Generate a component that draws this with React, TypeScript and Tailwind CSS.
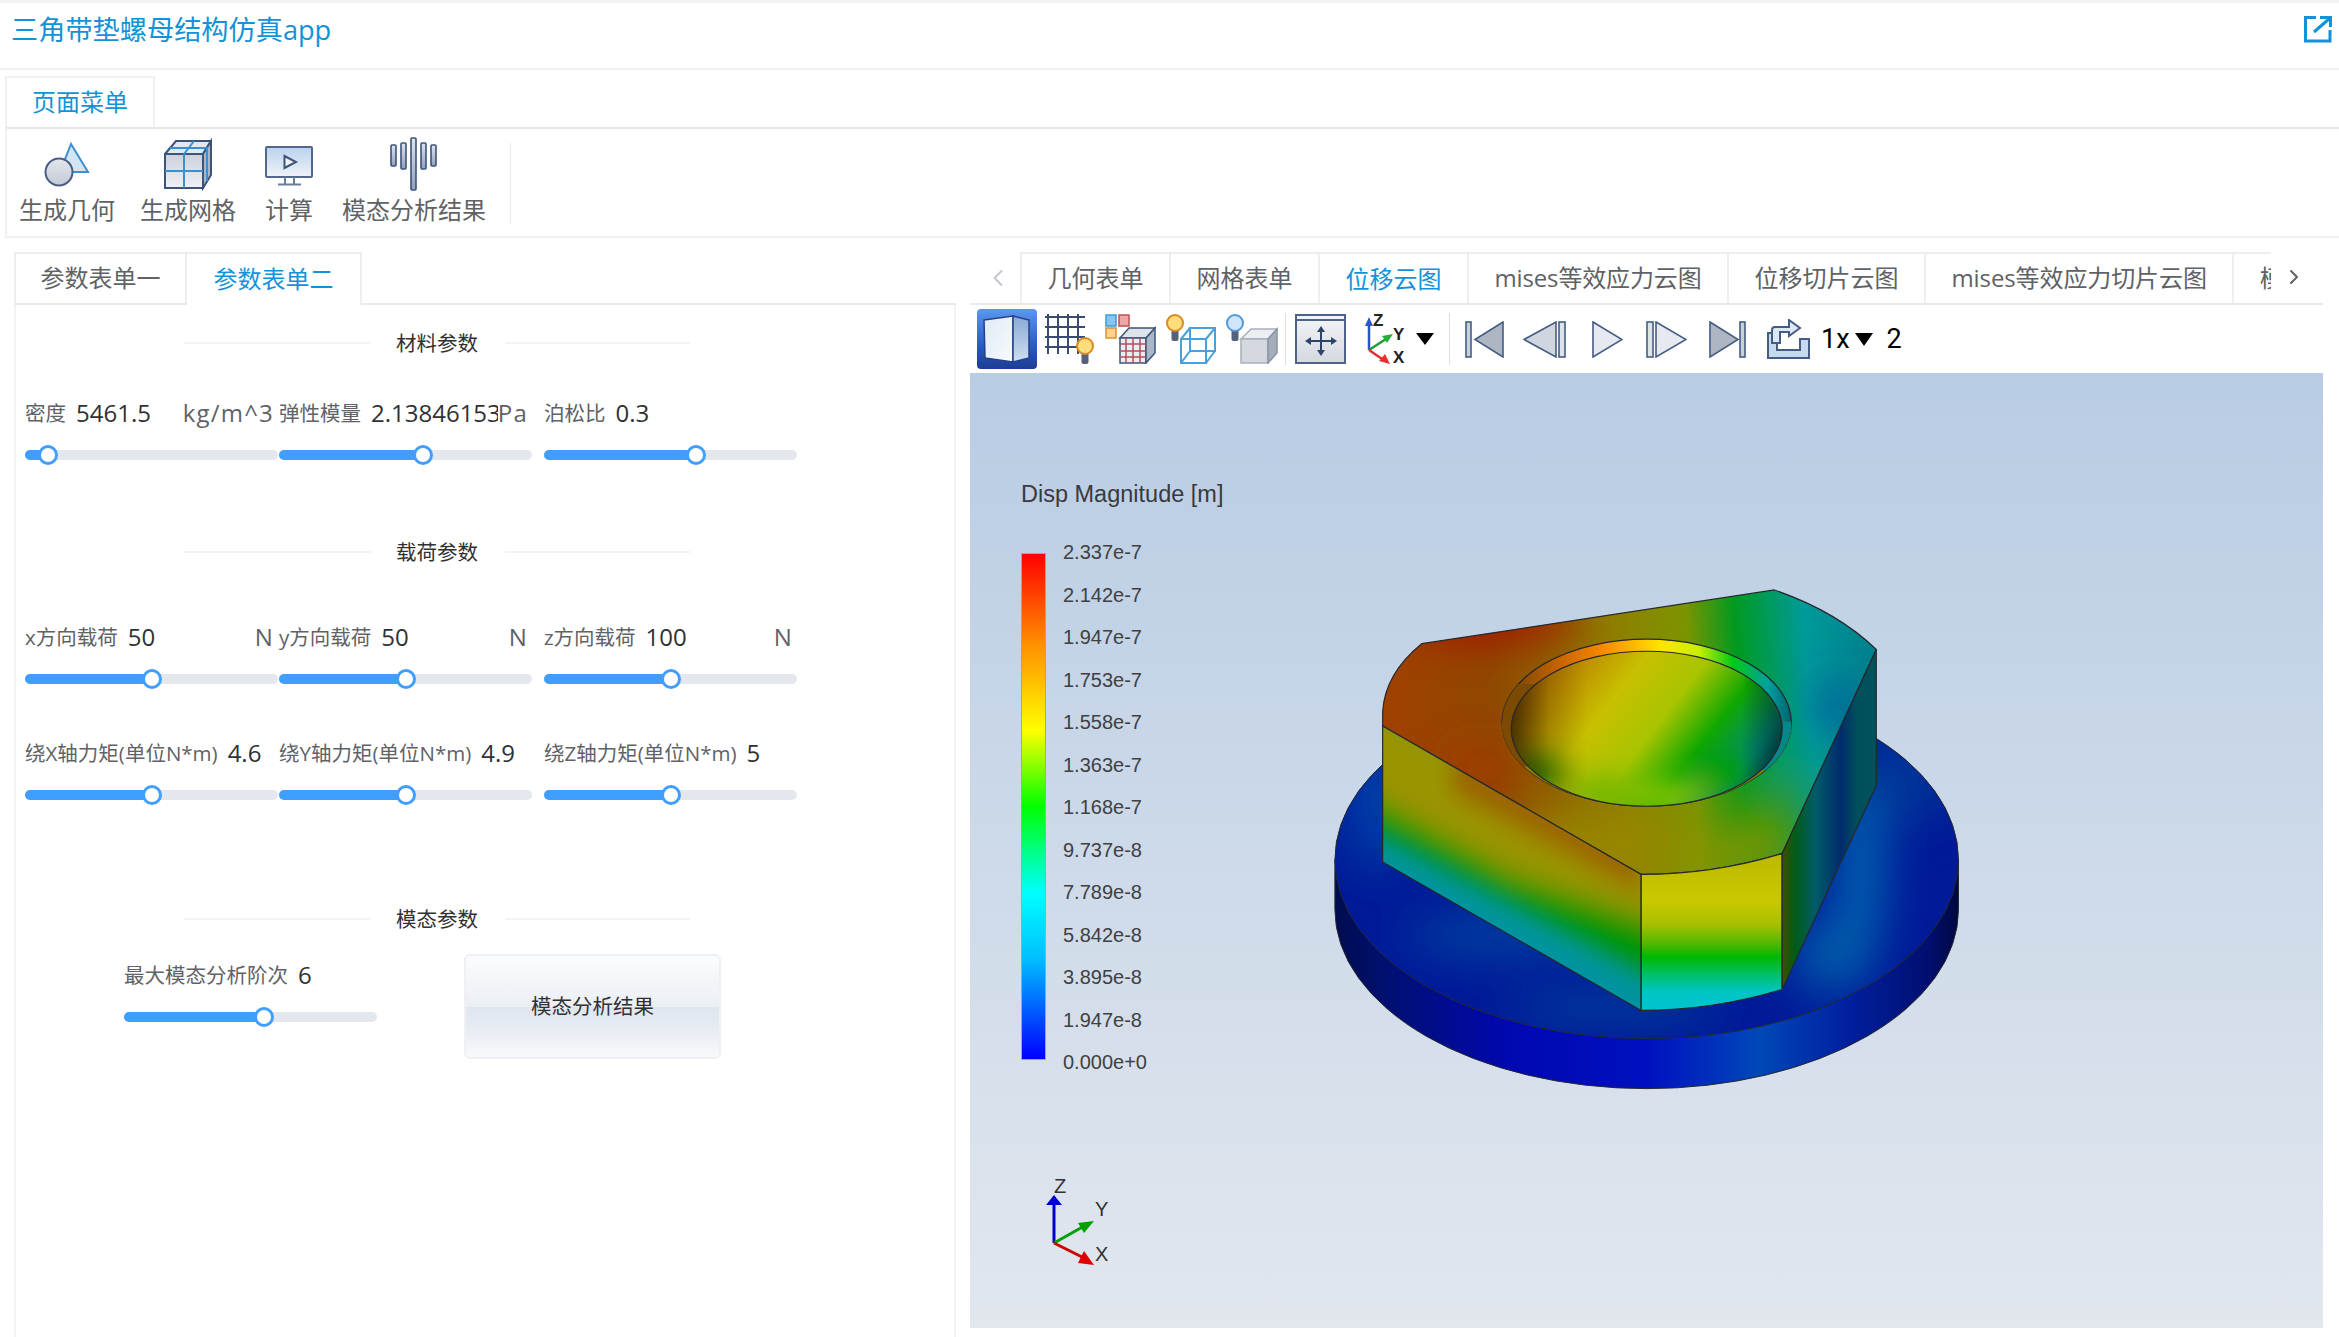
import React from "react";
import { ChevronLeft, ChevronRight } from "lucide-react";

const FONT = { fontFamily: '"Open Sans","Noto Sans CJK SC",sans-serif' };

function Slider({ pct }: { pct: number }) {
  return (
    <div className="relative h-[20px] w-full flex items-center">
      <div className="h-[10px] w-full rounded-full bg-[#e4e7ed] overflow-hidden">
        <div className="h-full bg-[#409eff]" style={{ width: `${pct}%` }} />
      </div>
      <div
        className="absolute top-0 -ml-[10px] h-[20px] w-[20px] rounded-full border-[3px] border-[#409eff] bg-white"
        style={{ left: `${pct}%` }}
      />
    </div>
  );
}

function Field({ label, value, unit, pct, w }: { label: string; value: string; unit?: string; pct: number; w: string }) {
  return (
    <div className={w}>
      <div className="flex h-[30px] w-[249px] items-center whitespace-nowrap">
        <span className="text-[20.5px] text-[#606266]">{label}</span>
        <span className="ml-[10px] min-w-0 flex-1 overflow-hidden text-[24px] text-[#303133]">{value}</span>
        {unit && <span className="text-[24px] tracking-[1.2px] text-[#606266]">{unit}</span>}
      </div>
      <div className="mt-[17px] w-[253px]">
        <Slider pct={pct} />
      </div>
    </div>
  );
}

function SectionTitle({ title, className }: { title: string; className: string }) {
  return (
    <div className={`ml-[159px] flex h-[30px] items-center ${className}`}>
      <div className="h-[2px] w-[187px] bg-[#f2f3f5]" />
      <span className="ml-[25px] mr-[27px] w-[82px] whitespace-nowrap text-[20.5px] text-[#303133]">{title}</span>
      <div className="h-[2px] w-[185px] bg-[#f2f3f5]" />
    </div>
  );
}

function Tab({ label, active, first, className }: { label: string; active?: boolean; first?: boolean; className?: string }) {
  return (
    <div
      className={`flex h-[51px] flex-none items-center justify-center border-t-2 border-r-2 border-[#eceef2] px-[25.5px] pb-[2px] text-[24px] whitespace-nowrap ${first ? "border-l-2" : ""} ${active ? "text-[#1492d8] -mb-[2px] h-[53px] bg-white" : "text-[#606266]"} ${className ?? ""}`}
    >
      {label}
    </div>
  );
}

/* ---------- ribbon icons ---------- */
function GeoIcon() {
  return (
    <svg width="48" height="54" viewBox="0 0 48 54">
      <defs>
        <linearGradient id="g1" x1="0" y1="0" x2="0" y2="1"><stop offset="0" stopColor="#e3e6ec" /><stop offset="1" stopColor="#c4c9d4" /></linearGradient>
      </defs>
      <path d="M28 7 L45 35 L17 35 Z" fill="#d3e4f4" stroke="#3f8fcf" strokeWidth="2" />
      <circle cx="16" cy="35" r="13.5" fill="url(#g1)" stroke="#4a5e82" strokeWidth="2" />
    </svg>
  );
}
function MeshIcon() {
  return (
    <svg width="48" height="54" viewBox="0 0 48 54">
      <defs>
        <linearGradient id="g2" x1="0" y1="0" x2="0" y2="1"><stop offset="0" stopColor="#ccd0da" /><stop offset="1" stopColor="#f0f1f5" /></linearGradient>
      </defs>
      <path d="M1 17 L12 4 L47 4 L39 17 Z" fill="#dfe8f3" stroke="#3d5478" strokeWidth="2" />
      <rect x="1" y="17" width="38" height="34" fill="url(#g2)" stroke="#3d5478" strokeWidth="2" />
      <path d="M39 17 L47 4 L47 38 L39 51 Z" fill="#a9b5c9" stroke="#3d5478" strokeWidth="2" />
      <path d="M20 17 V51 M1 34 H39 M20 17 L30 4 M6 11 H43 M43 10 V44" stroke="#3a8fcf" strokeWidth="2" fill="none" />
    </svg>
  );
}
function MonitorIcon() {
  return (
    <svg width="48" height="54" viewBox="0 0 48 54">
      <defs>
        <linearGradient id="g3" x1="0" y1="0" x2="0" y2="1"><stop offset="0" stopColor="#b9d2ee" /><stop offset="1" stopColor="#eff3f8" /></linearGradient>
      </defs>
      <rect x="1" y="10" width="46" height="30" rx="1" fill="url(#g3)" stroke="#51688c" strokeWidth="2" />
      <path d="M19.5 19 L31 25 L19.5 31 Z" fill="#eef3f9" stroke="#3d5478" strokeWidth="2" />
      <path d="M20 40 V47 M29 40 V47 M13 47.5 H36" stroke="#6a7d9c" strokeWidth="2" fill="none" />
    </svg>
  );
}
function BarsIcon() {
  const bars = [[1, 7, 29], [11, 5, 32], [21, 0, 53], [31, 5, 32], [41, 7, 29]];
  return (
    <svg width="48" height="54" viewBox="0 0 48 54">
      <defs>
        <linearGradient id="g4" x1="0" y1="0" x2="0" y2="1"><stop offset="0" stopColor="#dfe5ee" /><stop offset="1" stopColor="#8fa0bd" /></linearGradient>
      </defs>
      {bars.map(([x, a, b]) => (
        <rect key={x} x={x} y={a + 1} width="5" height={b - a - 1} fill="url(#g4)" stroke="#3d5478" strokeWidth="1.6" rx="1" />
      ))}
    </svg>
  );
}

function RibbonItem({ icon, label, className }: { icon: React.ReactNode; label: string; className: string }) {
  return (
    <div className={`flex flex-col items-center ${className}`}>
      <div className="h-[54px]">{icon}</div>
      <div className="mt-[4px] h-[30px] text-[24px] leading-[30px] text-[#606266] whitespace-nowrap">{label}</div>
    </div>
  );
}

/* ---------- toolbar icons ---------- */
function ActiveBox() {
  return (
    <div className="h-[60px] w-[60px] flex-none rounded-[4px] bg-[linear-gradient(#5c97ee,#2a5cc0_60%,#1c3c94)]">
      <svg width="60" height="60" viewBox="0 0 60 60">
        <defs>
          <linearGradient id="t1" x1="0" y1="0" x2="1" y2="1"><stop offset="0" stopColor="#dfe9f6" /><stop offset="1" stopColor="#f9fbfd" /></linearGradient>
          <linearGradient id="t2" x1="0" y1="0" x2="0" y2="1"><stop offset="0" stopColor="#8aa9d6" /><stop offset="1" stopColor="#cfdff0" /></linearGradient>
        </defs>
        <path d="M7 11 L36 7 L36 53 L8 49 Z" fill="url(#t1)" stroke="#22418a" strokeWidth="1.5" />
        <path d="M36 7 L52 11 L52 49 L36 53 Z" fill="url(#t2)" stroke="#22418a" strokeWidth="1.5" />
      </svg>
    </div>
  );
}
function Bulb({ x, y, c1, c2 }: { x: number; y: number; c1: string; c2: string }) {
  return (
    <g>
      <rect x={x - 3.5} y={y + 6} width="7" height="12" rx="2" fill="#55617a" />
      <circle cx={x} cy={y} r="8" fill={c1} stroke={c2} strokeWidth="2" />
    </g>
  );
}
function MeshBulb() {
  return (
    <svg width="50" height="50" viewBox="0 0 50 50" className="ml-[8px] flex-none">
      <path d="M3 0 V40 M13 0 V40 M23 0 V40 M33 0 V40 M0 3 H40 M0 13 H40 M0 23 H40 M0 33 H40" stroke="#3a4a70" strokeWidth="2" fill="none" />
      <Bulb x={40} y={32} c1="#ffdc7c" c2="#d98a20" />
    </svg>
  );
}
function ColorCube() {
  return (
    <svg width="51" height="50" viewBox="0 0 51 50" className="ml-[10px] flex-none">
      <rect x="1" y="1" width="10" height="11" fill="#8cc4ee" stroke="#3d9ad8" strokeWidth="1.5" />
      <rect x="14" y="1" width="10" height="11" fill="#eaa8a8" stroke="#c05050" strokeWidth="1.5" />
      <rect x="1" y="14" width="10" height="10" fill="#fcd488" stroke="#e09030" strokeWidth="1.5" />
      <path d="M15 24 L24 14 L50 14 L41 24 Z" fill="#dfe3ea" stroke="#3d5478" strokeWidth="1.5" />
      <rect x="15" y="24" width="26" height="25" fill="#ececf0" stroke="#3d5478" strokeWidth="1.5" />
      <path d="M41 24 L50 14 L50 39 L41 49 Z" fill="#a9b5c9" stroke="#3d5478" strokeWidth="1.5" />
      <path d="M21 24 V49 M28 24 V49 M35 24 V49 M15 30 H41 M15 37 H41 M15 43 H41" stroke="#b0505c" strokeWidth="1.5" fill="none" />
    </svg>
  );
}
function WireBulb() {
  return (
    <svg width="50" height="50" viewBox="0 0 50 50" className="ml-[10px] flex-none">
      <g fill="none" stroke="#4aa0d8" strokeWidth="2">
        <rect x="15" y="25" width="25" height="24" />
        <rect x="24" y="14" width="25" height="23" />
        <path d="M15 25 L24 14 M40 25 L49 14 M40 49 L49 37 M15 49 L24 37" />
      </g>
      <Bulb x={9} y={9} c1="#ffdc7c" c2="#d98a20" />
    </svg>
  );
}
function SolidBulb() {
  return (
    <svg width="52" height="50" viewBox="0 0 52 50" className="ml-[10px] flex-none">
      <path d="M15 25 L25 15 L51 15 L42 25 Z" fill="#eceef2" stroke="#a8b0bc" strokeWidth="1.5" />
      <rect x="15" y="25" width="27" height="24" fill="#d5d8de" stroke="#a8b0bc" strokeWidth="1.5" />
      <path d="M42 25 L51 15 L51 39 L42 49 Z" fill="#a5adba" stroke="#8a94a4" strokeWidth="1.5" />
      <Bulb x={9} y={9} c1="#cfe6fa" c2="#4d9ad8" />
    </svg>
  );
}
function FitIcon() {
  return (
    <svg width="51" height="50" viewBox="0 0 51 50" className="ml-[9px] flex-none">
      <defs>
        <linearGradient id="t3" x1="0" y1="0" x2="0" y2="1"><stop offset="0" stopColor="#f4f5f8" /><stop offset="1" stopColor="#d4d8df" /></linearGradient>
      </defs>
      <rect x="1" y="1" width="49" height="48" fill="url(#t3)" stroke="#4d6488" strokeWidth="2" />
      <path d="M1 6 H50" stroke="#4d6488" strokeWidth="2" />
      <path d="M26 16 V38 M14 27 H38" stroke="#2c4468" strokeWidth="2" />
      <path d="M26 12 L30 18 H22 Z M26 42 L30 36 H22 Z M10 27 L16 23 V31 Z M42 27 L36 23 V31 Z" fill="#2c4468" />
    </svg>
  );
}
function AxisIcon() {
  return (
    <svg width="43" height="50" viewBox="0 0 43 50" className="ml-[19px] flex-none" style={{ fontFamily: '"Liberation Sans",sans-serif' }}>
      <path d="M4 36 V8" stroke="#2a55c8" strokeWidth="2.5" />
      <path d="M4 3 L8 12 H0 Z" fill="#2a55c8" />
      <path d="M4 36 L24 23" stroke="#1aa034" strokeWidth="2.5" />
      <path d="M28 20 L17 22 L22 29 Z" fill="#22b03c" />
      <path d="M4 36 L20 47" stroke="#e03030" strokeWidth="2.5" />
      <path d="M25 50 L14 47 L20 40 Z" fill="#e83030" />
      <text x="8" y="12" fontSize="17" fontWeight="700" fill="#222">Z</text>
      <text x="28" y="26" fontSize="17" fontWeight="700" fill="#222">Y</text>
      <text x="28" y="49" fontSize="17" fontWeight="700" fill="#222">X</text>
    </svg>
  );
}
const NAVY = "#465d83";
function Vcr({ w, h = 37, ml, children }: { w: number; h?: number; ml: string; children: React.ReactNode }) {
  return (
    <svg width={w} height={h} viewBox={`0 0 ${w} ${h}`} className={`${ml} flex-none`}>
      {children}
    </svg>
  );
}

/* ---------- FEM model ---------- */
type Blob = [number, number, number, number, string];
function Blobs({ items }: { items: Blob[] }) {
  return (
    <>
      {items.map(([cx, cy, rx, ry, c], i) => (
        <ellipse key={i} cx={cx} cy={cy} rx={rx} ry={ry} fill={c} />
      ))}
    </>
  );
}

const TOP = "M265 243 L1033 87 Q1170 150 1255 260 L1050 852 Q900 913 743 913 L180 482 L180 440 Q185 330 265 243 Z";
const LEFT = "M180 482 L743 913 L743 1308 L180 877 Z";
const FRONT = "M743 913 Q900 913 1050 852 L1050 1247 Q900 1308 743 1308 Z";
const RIGHT = "M1050 852 L1255 260 L1255 655 L1050 1247 Z";
const E = "#26282c";

function NutModel() {
  const ns = { vectorEffect: "non-scaling-stroke" as const };
  return (
    <svg viewBox="0 0 1568 1568" preserveAspectRatio="none" width="720" height="540" className="absolute left-[330px] top-[187px]">
      <defs>
        <filter id="b40" x="-30%" y="-30%" width="160%" height="160%"><feGaussianBlur stdDeviation="30 40" /></filter>
        <filter id="bl" x="-30%" y="-30%" width="160%" height="160%"><feGaussianBlur stdDeviation="22 38" /></filter>
        <filter id="b60" x="-30%" y="-30%" width="160%" height="160%"><feGaussianBlur stdDeviation="50 66" /></filter>
        <clipPath id="cTop"><path d={TOP} /></clipPath>
        <clipPath id="cLeft"><path d={LEFT} /></clipPath>
        <clipPath id="cDisc"><ellipse cx="755" cy="870" rx="679" ry="520" /></clipPath>
        <clipPath id="cHole"><ellipse cx="755" cy="490" rx="295" ry="225" /></clipPath>
        <clipPath id="cOuter"><ellipse cx="755" cy="472" rx="315" ry="242" /></clipPath>
        <linearGradient id="side" x1="0" y1="0" x2="1" y2="0">
          <stop offset="0" stopColor="#000c50" /><stop offset="0.08" stopColor="#001070" /><stop offset="0.28" stopColor="#0008b0" /><stop offset="0.5" stopColor="#0010c0" />
          <stop offset="0.68" stopColor="#0048b8" /><stop offset="0.82" stopColor="#0020a0" /><stop offset="0.95" stopColor="#000f70" /><stop offset="1" stopColor="#000840" />
        </linearGradient>
        <linearGradient id="front" x1="0" y1="0" x2="0" y2="1">
          <stop offset="0" stopColor="#bcb800" /><stop offset="0.3" stopColor="#c8c800" /><stop offset="0.45" stopColor="#a8c000" /><stop offset="0.58" stopColor="#4cb800" />
          <stop offset="0.66" stopColor="#00b800" /><stop offset="0.78" stopColor="#00c070" /><stop offset="0.88" stopColor="#00c4c4" /><stop offset="1" stopColor="#00c4d0" />
        </linearGradient>
        <linearGradient id="right" x1="0" y1="0" x2="1" y2="0">
          <stop offset="0" stopColor="#3c5000" /><stop offset="0.14" stopColor="#005c18" /><stop offset="0.35" stopColor="#005c68" /><stop offset="0.62" stopColor="#002c6c" />
          <stop offset="0.8" stopColor="#00505c" /><stop offset="1" stopColor="#00525c" />
        </linearGradient>
        <linearGradient id="rim" x1="0" y1="0" x2="1" y2="0">
          <stop offset="0" stopColor="#6a4000" /><stop offset="0.2" stopColor="#c86400" /><stop offset="0.35" stopColor="#f88a00" /><stop offset="0.55" stopColor="#ffe400" />
          <stop offset="0.68" stopColor="#c8f000" /><stop offset="0.8" stopColor="#00c818" /><stop offset="0.92" stopColor="#00a0a0" /><stop offset="1" stopColor="#00606c" />
        </linearGradient>
        <linearGradient id="topBase" gradientUnits="userSpaceOnUse" x1="180" y1="350" x2="1255" y2="300">
          <stop offset="0" stopColor="#a04000" /><stop offset="0.22" stopColor="#904800" /><stop offset="0.48" stopColor="#8e8000" />
          <stop offset="0.62" stopColor="#7c9400" /><stop offset="0.72" stopColor="#009a20" /><stop offset="0.86" stopColor="#009a9a" /><stop offset="1" stopColor="#00808c" />
        </linearGradient>
        <linearGradient id="holeBase" gradientUnits="userSpaceOnUse" x1="560" y1="280" x2="1040" y2="560">
          <stop offset="0" stopColor="#b87400" /><stop offset="0.3" stopColor="#c8c000" /><stop offset="0.52" stopColor="#a8c400" />
          <stop offset="0.72" stopColor="#10a800" /><stop offset="0.92" stopColor="#008878" /><stop offset="1" stopColor="#006068" />
        </linearGradient>
        <linearGradient id="holeShade" gradientUnits="userSpaceOnUse" x1="460" y1="0" x2="1050" y2="0">
          <stop offset="0" stopColor="#000" stopOpacity="0.6" /><stop offset="0.14" stopColor="#000" stopOpacity="0.15" /><stop offset="0.28" stopColor="#000" stopOpacity="0" />
          <stop offset="0.85" stopColor="#000" stopOpacity="0" /><stop offset="1" stopColor="#000" stopOpacity="0.45" />
        </linearGradient>
      </defs>

      {/* disc */}
      <path d="M76 870 V1015 A679 520 0 0 0 1434 1015 V870 Z" fill="url(#side)" stroke={E} strokeWidth="1" {...ns} />
      <ellipse cx="755" cy="870" rx="679" ry="520" fill="#001a98" />
      <g clipPath="url(#cDisc)">
        <g filter="url(#b60)">
          <Blobs
            items={[
              [170, 700, 70, 200, "#0040a8"], [1320, 620, 110, 140, "#003098"], [1160, 1150, 90, 110, "#0058a8"],
              [1220, 900, 50, 260, "#0068b0"], [680, 1300, 240, 36, "#004c9c"], [430, 1090, 200, 36, "#005ca4"],
            ]}
          />
        </g>
      </g>
      <ellipse cx="755" cy="870" rx="679" ry="520" fill="none" stroke={E} strokeWidth="1" {...ns} />

      {/* top face */}
      <path d={TOP} fill="url(#topBase)" />
      <g clipPath="url(#cTop)">
        <g filter="url(#b60)">
          <Blobs
            items={[
              [420, 170, 190, 50, "#a81000"], [400, 600, 80, 40, "#a83000"],
              [1170, 430, 34, 80, "#0040a0"], [1090, 610, 70, 34, "#009a70"],
              [1020, 730, 90, 70, "#3c9600"], [950, 860, 140, 70, "#8a9400"], [640, 830, 180, 90, "#988800"],
            ]}
          />
        </g>
      </g>
      <path d={TOP} fill="none" stroke={E} strokeWidth="1.2" {...ns} />

      {/* rim and hole */}
      <ellipse cx="755" cy="472" rx="315" ry="242" fill="url(#rim)" stroke={E} strokeWidth="1.2" {...ns} />
      <g clipPath="url(#cOuter)">
        <rect x="440" y="470" width="630" height="250" fill="#8a8400" />
        <rect x="940" y="470" width="130" height="140" fill="#00888c" />
        <rect x="440" y="360" width="90" height="240" fill="#7c4a00" />
      </g>
      <ellipse cx="755" cy="490" rx="295" ry="225" fill="url(#holeBase)" />
      <g clipPath="url(#cHole)">
        <g filter="url(#b40)">
          <Blobs
            items={[
              [520, 620, 60, 50, "#2c7c00"], [660, 680, 70, 50, "#70b400"], [800, 690, 90, 40, "#a0c800"], [920, 620, 60, 60, "#00a000"],
            ]}
          />
        </g>
        <rect x="440" y="250" width="630" height="480" fill="url(#holeShade)" />
      </g>
      <ellipse cx="755" cy="490" rx="295" ry="225" fill="none" stroke={E} strokeWidth="1.2" {...ns} />

      {/* side faces */}
      <path d={LEFT} fill="#0094a0" />
      <g clipPath="url(#cLeft)">
        <g filter="url(#bl)">
          <path d="M100 640 L800 1070 V1230 L100 740 Z" fill="#009600" />
          <path d="M60 340 L860 900 V1090 L460 910 L60 620 Z" fill="#9a9400" />
          <path d="M330 560 L743 860 V960 L530 810 L330 670 Z" fill="#9c5c00" />
        </g>
      </g>
      <path d={LEFT} fill="none" stroke={E} strokeWidth="1.2" {...ns} />
      <path d={FRONT} fill="url(#front)" stroke={E} strokeWidth="1.2" {...ns} />
      <path d={RIGHT} fill="url(#right)" stroke={E} strokeWidth="1.2" {...ns} />
    </svg>
  );
}

const LEGEND = ["2.337e-7", "2.142e-7", "1.947e-7", "1.753e-7", "1.558e-7", "1.363e-7", "1.168e-7", "9.737e-8", "7.789e-8", "5.842e-8", "3.895e-8", "1.947e-8", "0.000e+0"];

export default function App() {
  return (
    <div className="relative h-[1337px] w-[2339px] overflow-hidden bg-white" style={FONT}>
      {/* header */}
      <div className="h-[3px] bg-[#f2f2f4]" />
      <header className="flex h-[67px] items-start justify-between border-b-2 border-[#eff0f2] pl-[11px] pr-[7px]">
        <h1 className="mt-[8px] text-[27.2px] font-normal leading-[38px] text-[#1492d8]">三角带垫螺母结构仿真app</h1>
        <svg width="28" height="27" viewBox="0 0 28 27" className="mt-[13px]" fill="none" stroke="#1492d8" strokeWidth="3">
          <path d="M12 1.5 H1.5 V25 H26 V14" />
          <path d="M10 16 L25 3" />
          <path d="M16 1.5 H26.5 V11" />
        </svg>
      </header>

      {/* ribbon */}
      <div className="ml-[5px] mt-[6px]">
        <div className="flex h-[51px] w-[150px] items-center justify-center rounded-t-[2px] border-t-2 border-l-2 border-r-2 border-[#f0f1f4] pb-[2px] text-[24px] text-[#1492d8]">页面菜单</div>
        <div className="flex h-[111px] items-start border-y-2 border-l-2 border-t-[#e6e8ee] border-b-[#eff0f2] border-l-[#f0f1f4] pt-[8px]">
          <RibbonItem icon={<GeoIcon />} label="生成几何" className="pl-[12px] pr-[12px]" />
          <RibbonItem icon={<MeshIcon />} label="生成网格" className="pl-[13px] pr-[15px]" />
          <RibbonItem icon={<MonitorIcon />} label="计算" className="pl-[14px] pr-[14px]" />
          <RibbonItem icon={<BarsIcon />} label="模态分析结果" className="pl-[15px] pr-[15px]" />
          <div className="ml-[9px] mt-[6px] h-[81px] w-px bg-[#e8e9ed]" />
        </div>
      </div>

      {/* main */}
      <div className="mt-[14px] flex">
        {/* left */}
        <div className="ml-[14px] w-[942px] flex-none">
          <div className="flex border-b-2 border-[#e8e9ee]">
            <Tab label="参数表单一" first className="w-[173px]" />
            <Tab label="参数表单二" active className="w-[175px]" />
          </div>
          <div className="h-[1034px] border-x-2 border-[#f2f3f5] pl-[9px]">
            <div className="h-[23px]" />
            <SectionTitle title="材料参数" className="" />
            <div className="mt-[40px] flex">
              <Field w="w-[254px]" label="密度" value="5461.5" unit="kg/m^3" pct={9} />
              <Field w="w-[265px]" label="弹性模量" value="2.13846153" unit="Pa" pct={57} />
              <Field w="w-[254px]" label="泊松比" value="0.3" pct={60} />
            </div>
            <SectionTitle title="载荷参数" className="mt-[72px]" />
            <div className="mt-[55px] flex">
              <Field w="w-[254px]" label="x方向载荷" value="50" unit="N" pct={50} />
              <Field w="w-[265px]" label="y方向载荷" value="50" unit="N" pct={50} />
              <Field w="w-[254px]" label="z方向载荷" value="100" unit="N" pct={50} />
            </div>
            <div className="mt-[49px] flex">
              <Field w="w-[254px]" label="绕X轴力矩(单位N*m)" value="4.6" pct={50} />
              <Field w="w-[265px]" label="绕Y轴力矩(单位N*m)" value="4.9" pct={50} />
              <Field w="w-[254px]" label="绕Z轴力矩(单位N*m)" value="5" pct={50} />
            </div>
            <SectionTitle title="模态参数" className="mt-[99px]" />
            <div className="ml-[99px] mt-[26px] flex items-start">
              <Field w="w-[340px]" label="最大模态分析阶次" value="6" pct={55.5} />
              <button className="-mt-[6px] h-[105px] w-[257px] rounded-[6px] border-2 border-[#eef0f3] bg-[linear-gradient(#fbfcfd,#ebeff4_50%,#dfe6ee_50%,#e6ebf2_70%,#f7f9fb)] text-[20.5px] text-[#303133]">
                模态分析结果
              </button>
            </div>
          </div>
        </div>

        {/* right */}
        <div className="ml-[14px] w-[1353px] flex-none">
          <div className="relative flex border-b-2 border-[#e8e9ee] pl-[50px]">
            <ChevronLeft strokeWidth={1.6} className="absolute left-[14px] top-[12px] h-[28px] w-[28px] text-[#c0c4cc]" />
            <div className="flex w-[1251px] overflow-hidden">
              <Tab label="几何表单" first />
              <Tab label="网格表单" />
              <Tab label="位移云图" active />
              <Tab label="mises等效应力云图" className="tracking-[-0.15px]" />
              <Tab label="位移切片云图" />
              <Tab label="mises等效应力切片云图" className="tracking-[-0.1px]" />
              <Tab label="模态分析结果" />
            </div>
            <ChevronRight className="absolute left-[1312px] top-[13px] h-[24px] w-[24px] text-[#606266]" />
          </div>

          {/* toolbar */}
          <div className="flex h-[68px] items-center pl-[7px]">
            <ActiveBox />
            <MeshBulb />
            <ColorCube />
            <WireBulb />
            <SolidBulb />
            <div className="ml-[7px] h-[52px] w-px flex-none bg-[#dcdfe4]" />
            <FitIcon />
            <AxisIcon />
            <svg width="18" height="12" viewBox="0 0 18 12" className="ml-[8px] flex-none"><path d="M0 0 H18 L9 12 Z" fill="#000" /></svg>
            <div className="ml-[15px] h-[52px] w-px flex-none bg-[#dcdfe4]" />
            <Vcr w={39} ml="ml-[15px]">
              <rect x="1" y="1" width="5" height="35" fill="#c8d0dc" stroke={NAVY} strokeWidth="1.6" />
              <path d="M10 18.5 L38 1 V36 Z" fill="#aeb6c3" stroke={NAVY} strokeWidth="1.6" />
            </Vcr>
            <Vcr w={43} ml="ml-[19px]">
              <path d="M1 18.5 L33 1 V36 Z" fill="#cfd6e0" stroke={NAVY} strokeWidth="1.6" />
              <rect x="36" y="1" width="6" height="35" fill="#dde3ea" stroke={NAVY} strokeWidth="1.6" />
            </Vcr>
            <Vcr w={31} ml="ml-[26px]">
              <path d="M1 1 L30 18.5 L1 36 Z" fill="#e6eaf0" stroke={NAVY} strokeWidth="1.6" />
            </Vcr>
            <Vcr w={41} ml="ml-[23px]">
              <rect x="1" y="1" width="6" height="35" fill="#dde3ea" stroke={NAVY} strokeWidth="1.6" />
              <path d="M10 1 L40 18.5 L10 36 Z" fill="#e6eaf0" stroke={NAVY} strokeWidth="1.6" />
            </Vcr>
            <Vcr w={37} ml="ml-[22px]">
              <path d="M1 1 L29 18.5 L1 36 Z" fill="#aeb6c3" stroke={NAVY} strokeWidth="1.6" />
              <rect x="31" y="1" width="5" height="35" fill="#c8d0dc" stroke={NAVY} strokeWidth="1.6" />
            </Vcr>
            <Vcr w={43} h={40} ml="ml-[21px]">
              <path d="M1 14 V39 H42 V20 H33 V31 H10 V14 Z" fill="#c6d9ef" stroke={NAVY} strokeWidth="2" />
              <path d="M5 24 V11 Q5 8 8 8 H22 V1 L33 9 L22 17 V13 H13 V24 Z" fill="#dce8f6" stroke={NAVY} strokeWidth="2" />
            </Vcr>
            <span className="ml-[11px] text-[27px] leading-none text-black" style={{ fontFamily: '"Roboto",sans-serif' }}>1x</span>
            <svg width="18" height="13" viewBox="0 0 18 13" className="ml-[5px] flex-none"><path d="M0 0 H18 L9 13 Z" fill="#000" /></svg>
            <span className="ml-[14px] text-[27px] leading-none text-black" style={{ fontFamily: '"Roboto",sans-serif' }}>2</span>
          </div>

          {/* viewer */}
          <div className="relative h-[955px] bg-[linear-gradient(#b8cce4,#e2e7ee)] pl-[51px] pt-[106px]" style={{ fontFamily: '"Liberation Sans",sans-serif' }}>
            <div className="h-[30px] text-[23.5px] leading-[30px] text-[#3a3a3a]">Disp Magnitude [m]</div>
            <div className="mt-[41px] flex">
              <div className="mt-[3px] h-[507px] w-[25px] border border-[#9aa7b8] bg-[linear-gradient(#ff0000,#ff9000_18%,#ffff00_35%,#00ff00_50%,#00ffff_67%,#00c0ff_80%,#0000ff)]" />
              <div className="ml-[17px] -mt-[10px]">
                {LEGEND.map((t) => (
                  <div key={t} className="h-[42.5px] text-[20px] leading-[24px] text-[#404040]">{t}</div>
                ))}
              </div>
            </div>
            <NutModel />
            <svg width="80" height="100" viewBox="0 0 80 100" className="absolute left-[72px] top-[800px]" fill="none">
              <path d="M12 70 V24" stroke="#0000d0" strokeWidth="3" />
              <path d="M12 26 L20 26 L12 16 L4 26 Z" transform="translate(0 6)" fill="#0000d0" />
              <path d="M12 70 L44 52" stroke="#00a000" strokeWidth="3" />
              <path d="M52 48 L36 50 L42 60 Z" fill="#00a000" />
              <path d="M12 70 L44 86" stroke="#d00000" strokeWidth="3" />
              <path d="M52 92 L36 90 L42 78 Z" fill="#e00000" />
              <text x="12" y="20" fontSize="20" fill="#333">Z</text>
              <text x="53" y="43" fontSize="20" fill="#333">Y</text>
              <text x="53" y="88" fontSize="20" fill="#333">X</text>
            </svg>
          </div>
        </div>
      </div>
    </div>
  );
}
